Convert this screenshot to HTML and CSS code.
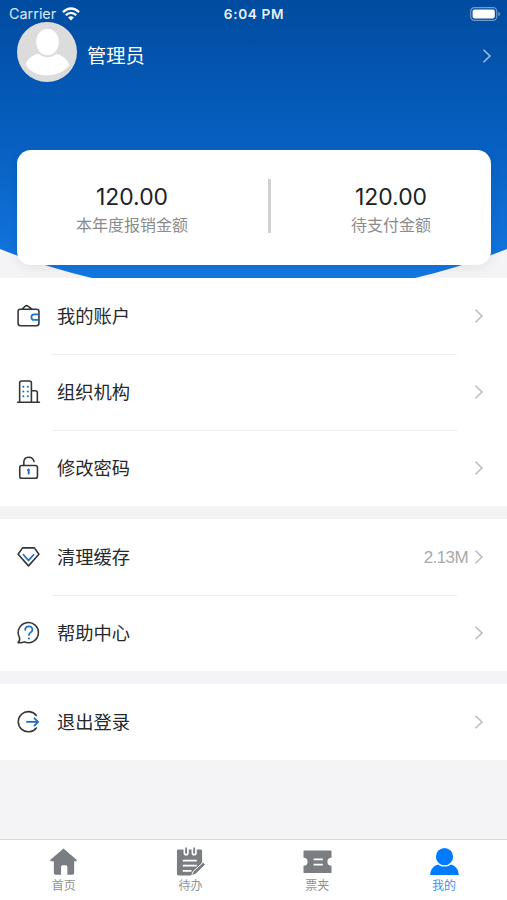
FILE: index.html
```html
<!DOCTYPE html>
<html lang="zh-CN">
<head>
<meta charset="utf-8">
<title>我的</title>
<link rel="stylesheet" href="styles.css">
</head>
<body>
<div class="app">
  <header class="hero">
    <svg class="hero-bg" viewBox="0 0 507 278" preserveAspectRatio="none">
      <defs><linearGradient id="sky" x1="0" y1="0" x2="0" y2="1"><stop offset="0" stop-color="#004b9f"/><stop offset=".5" stop-color="#075fc0"/><stop offset="1" stop-color="#1377e2"/></linearGradient></defs>
      <path d="M0 0H507V249Q462 267 415 278H92Q45 267 0 249Z" fill="url(#sky)"/>
    </svg>
    <div class="status">
      <div class="carrier"><span>Carrier</span>
        <svg width="18" height="14" viewBox="0 0 18 14" fill="none" stroke="#fff" stroke-width="2.3"><path d="M.9 5.2Q9-2.1 17.1 5.2M3.8 8.2Q9 3.5 14.2 8.2"/><path d="M9 13.5L6.1 10.5Q9 8.1 11.9 10.5Z" fill="#fff" stroke="none"/></svg>
      </div>
      <span class="time">6:04 PM</span>
      <svg class="battery" width="31" height="14" viewBox="0 0 31 14"><rect x=".7" y=".7" width="26" height="12.6" rx="3.6" fill="none" stroke="#6f9acb" stroke-width="1.2"/><rect x="2.6" y="2.6" width="22.2" height="8.8" rx="1.8" fill="#fff"/><path d="M28.3 4.7Q30.2 5.4 30.2 7T28.3 9.3Z" fill="#6f9acb"/></svg>
    </div>
    <div class="profile">
      <svg width="60" height="60" viewBox="0 0 60 60"><circle cx="30" cy="30" r="30" fill="#dcdcdc"/><path d="M8.500 43Q11 33 25 31H35Q49 33 52.500 43Q44 53.500 30 53.500T8.500 43Z" fill="#fff"/><ellipse cx="30.500" cy="20" rx="12.300" ry="14.200" fill="#fff" stroke="#dcdcdc" stroke-width="2"/></svg>
      <span class="name">管理员</span>
      <svg class="go" width="10" height="16" viewBox="0 0 10 16"><path d="M1.500 1.700L8 8L1.500 14.300"/></svg>
    </div>
    <section class="card">
      <div class="stat"><b>120.00</b><span>本年度报销金额</span></div>
      <i class="split"></i>
      <div class="stat"><b>120.00</b><span>待支付金额</span></div>
    </section>
  </header>

  <main class="groups">
    <section class="group">
      <div class="row">
        <svg class="icon" viewBox="0 0 24 24"><path d="M4 6H19.500Q22 6 22 8V19.500Q22 21.800 19.500 21.800H4.500Q2 21.800 2 19.500V8Q2 6 4 6M6 5.800L8.700 3.100Q10 1.900 11.500 3.100L15.300 5.800"/><path class="blue thick" d="M22 10.900H17.500A2.700 2.700 0 0 0 17.500 16.300H22"/></svg>
        <span class="label">我的账户</span><svg class="go" width="10" height="16" viewBox="0 0 10 16"><path d="M1.500 1.700L8 8L1.500 14.300"/></svg>
      </div>
      <div class="row">
        <svg class="icon" viewBox="0 0 24 24"><path d="M1.500 22.300H22.500M3.500 22V4Q3.500 2 5.500 2H12.800Q14.800 2 14.800 4V22M15 11.300H18.500Q20.500 11.300 20.500 13.300V22"/><path class="blue dots" d="M7 7.500h.1M11.300 7.500h.1M7 12h.1M11.300 12h.1M7 16.500h.1M11.300 16.500h.1"/></svg>
        <span class="label">组织机构</span><svg class="go" width="10" height="16" viewBox="0 0 10 16"><path d="M1.500 1.700L8 8L1.500 14.300"/></svg>
      </div>
      <div class="row">
        <svg class="icon" viewBox="0 0 24 24"><rect x="3.600" y="10" width="17" height="12.300" rx="2"/><path d="M7.500 10V7C7.500 .8 16 .5 17.300 6.300"/><path class="blue dots" d="M12.200 14V17.800M11.400 14.500H12"/></svg>
        <span class="label">修改密码</span><svg class="go" width="10" height="16" viewBox="0 0 10 16"><path d="M1.500 1.700L8 8L1.500 14.300"/></svg>
      </div>
    </section>
    <section class="group">
      <div class="row">
        <svg class="icon" viewBox="0 0 24 24"><path d="M6.300 3.700H17.700L22 9.800L12 21L2 9.800Z"/><path class="blue thick" d="M7.200 10.300L12 15.800L16.900 10.300"/></svg>
        <span class="label">清理缓存</span><span class="value">2.13M</span><svg class="go" width="10" height="16" viewBox="0 0 10 16"><path d="M1.500 1.700L8 8L1.500 14.300"/></svg>
      </div>
      <div class="row">
        <svg class="icon" viewBox="0 0 24 24"><path d="M3.300 16.700A9.700 9.700 0 1 1 8 21Q5.500 22.200 2 21.700Q4.200 19.500 3.300 16.700Z"/><path class="blue thick" d="M8.800 9.500C9 5 15.800 5 15.800 9.300C15.800 12 12.400 11.800 12.400 14.500"/><path class="blue dots" d="M12.400 17.700h.1"/></svg>
        <span class="label">帮助中心</span><svg class="go" width="10" height="16" viewBox="0 0 10 16"><path d="M1.500 1.700L8 8L1.500 14.300"/></svg>
      </div>
    </section>
    <section class="group">
      <div class="row">
        <svg class="icon" viewBox="0 0 24 24"><path d="M19.500 6.200A9.700 9.700 0 1 0 19.500 18.200"/><path class="blue thick" d="M10.500 12.400H21M17.700 8.900L21.200 12.400L17.700 15.900"/></svg>
        <span class="label">退出登录</span><svg class="go" width="10" height="16" viewBox="0 0 10 16"><path d="M1.500 1.700L8 8L1.500 14.300"/></svg>
      </div>
    </section>
  </main>

  <nav class="tabs">
    <div class="tab"><svg viewBox="0 0 30 30"><path d="M15 1.500L28.800 13.500Q29 14.700 28 14.700H26V27Q26 28.800 24.300 28.800H19V20.500Q19 18.800 17.300 18.800H14.200Q12.500 18.800 12.500 20.500V28.800H6.700Q5 28.800 5 27V14.700H2Q1 14.700 1.200 13.500Z"/></svg><span>首页</span></div>
    <div class="tab"><svg viewBox="0 0 30 30"><path d="M2.500 2.500H25.500Q27 2.500 27 4V17L16 29.500H2.500Q1 29.500 1 28V4Q1 2.500 2.500 2.500Z"/><path class="cut" d="M8.700 0V6Q8.700 8 10.500 8T12.300 6V0M17 0V6Q17 8 18.800 8T20.600 6V0M7 14H21.500M7 19.300H21.500M7 24.800H16"/><path d="M9.700 .5h1.700v6h-1.700ZM18 .5h1.700v6h-1.700Z"/><path class="pencil" d="M16 30L17.700 25.500L28 15.800L30.500 18.200L20.500 28Z"/></svg><span>待办</span></div>
    <div class="tab"><svg viewBox="0 0 30 30"><path d="M1.500 3.500H28.500Q29.500 3.500 29.500 4.500V11A4.200 4.200 0 0 0 29.500 19.500V26Q29.500 27 28.500 27H1.500Q.5 27 .5 26V19.500A4.200 4.200 0 0 0 .5 11V4.500Q.5 3.500 1.500 3.500Z"/><path class="cut" d="M11 12.800H20.500M11 18.300H20.500"/></svg><span>票夹</span></div>
    <div class="tab active"><svg viewBox="0 0 30 30"><circle cx="15" cy="10" r="8.900"/><path d="M.2 29C.5 22 4.500 19 8.500 18C12 21 18 21 21.500 18C25.500 19 29.500 22 29.800 29Z"/></svg><span>我的</span></div>
  </nav>
</div>
</body>
</html>
```
FILE: styles.css
```css
* { box-sizing: border-box; }
body { margin: 0; font-family: "Liberation Sans", "Noto Sans CJK SC", sans-serif; }
svg { display: block; flex: none; }
.app { width: 507px; height: 900px; display: flex; flex-direction: column; background: #f4f4f6; overflow: hidden; }

.hero { height: 278px; position: relative; isolation: isolate; color: #fff; flex: none; overflow: hidden; }
.hero-bg { position: absolute; inset: 0; z-index: -1; width: 100%; height: 100%; }
.status { height: 22px; padding: 5px 8px 0 9px; display: grid; grid-template-columns: 1fr auto 1fr; align-items: center; font: 500 14px/18px Inter, sans-serif; }
.carrier { display: flex; align-items: center; gap: 6px; font-weight: 400; font-size: 14.4px; color: #dce9f7; }
.time { font-weight: 600; font-size: 13.6px; letter-spacing: .65px; color: #eaf2fb; }
.battery { justify-self: end; margin-top: -1px; margin-right: -2px; }
.profile { height: 60px; margin: 0 15px 0 17px; display: flex; align-items: center; }
.name { margin-left: 10px; font-size: 19.3px; line-height: 28px; padding-top: 9px; }
.go { margin-left: auto; fill: none; stroke: #bababd; stroke-width: 1.5; }
.row .go { margin-top: -1px; }
.profile .go { stroke: #a5c1e2; margin-top: 7px; }
.card { height: 115px; margin: 68px 16px 0 17px; border-radius: 14px; background: #fff; color: #202226; display: grid; grid-template-columns: 230px 1fr 200px; align-items: center; box-shadow: 0 3px 12px rgba(0, 0, 0, .07); }
.stat { display: flex; flex-direction: column; align-items: center; padding-top: 6px; }
.stat b { font: 400 22.9px/29px Inter, sans-serif; }
.stat span { font-size: 16px; line-height: 27px; color: #8b8b8b; }
.split { width: 3px; height: 54px; background: #d1d1d3; justify-self: center; margin-top: -4px; }

.groups { display: flex; flex-direction: column; gap: 13px; flex: 1; }
.group { background: #fff; }
.row { height: 76px; padding: 0 23px 0 16px; display: flex; align-items: center; position: relative; }
.row:not(:last-child)::after { content: ""; position: absolute; left: 52px; right: 50px; bottom: -1px; height: 1px; background: #ededee; }
.icon { width: 25px; height: 25px; margin-top: -2px; fill: none; stroke: #323438; stroke-width: 1.5; stroke-linejoin: round; stroke-linecap: round; }
.blue { stroke: #1b6fcb; }
.thick { stroke-width: 1.7; }
.dots { stroke-width: 1.9; }
.label { margin-left: 16px; font-size: 18.3px; line-height: 28px; color: #26282c; padding-top: 1px; }
.value { margin-left: auto; font-size: 17px; letter-spacing: -.6px; color: #aaa; line-height: 20px; padding-top: 2px; }
.value + .go { margin-left: 6px; }

.tabs { height: 61px; border-top: 1px solid #d9d9dc; background: #fff; display: grid; grid-template-columns: repeat(4, 1fr); padding: 7px 0 0; flex: none; }
.tab { display: flex; flex-direction: column; align-items: center; color: #7a7e83; padding-left: 1px; }
.tab svg { width: 29px; height: 29px; fill: currentColor; overflow: visible; }
.tab span { margin-top: 1px; font-size: 12px; line-height: 19px; color: #929294; }
.active { color: #007aff; }
.tab.active span { color: #3b91ee; }
.cut { fill: none; stroke: #fff; stroke-width: 1.8; }
.pencil { stroke: #fff; stroke-width: 1; }
```
